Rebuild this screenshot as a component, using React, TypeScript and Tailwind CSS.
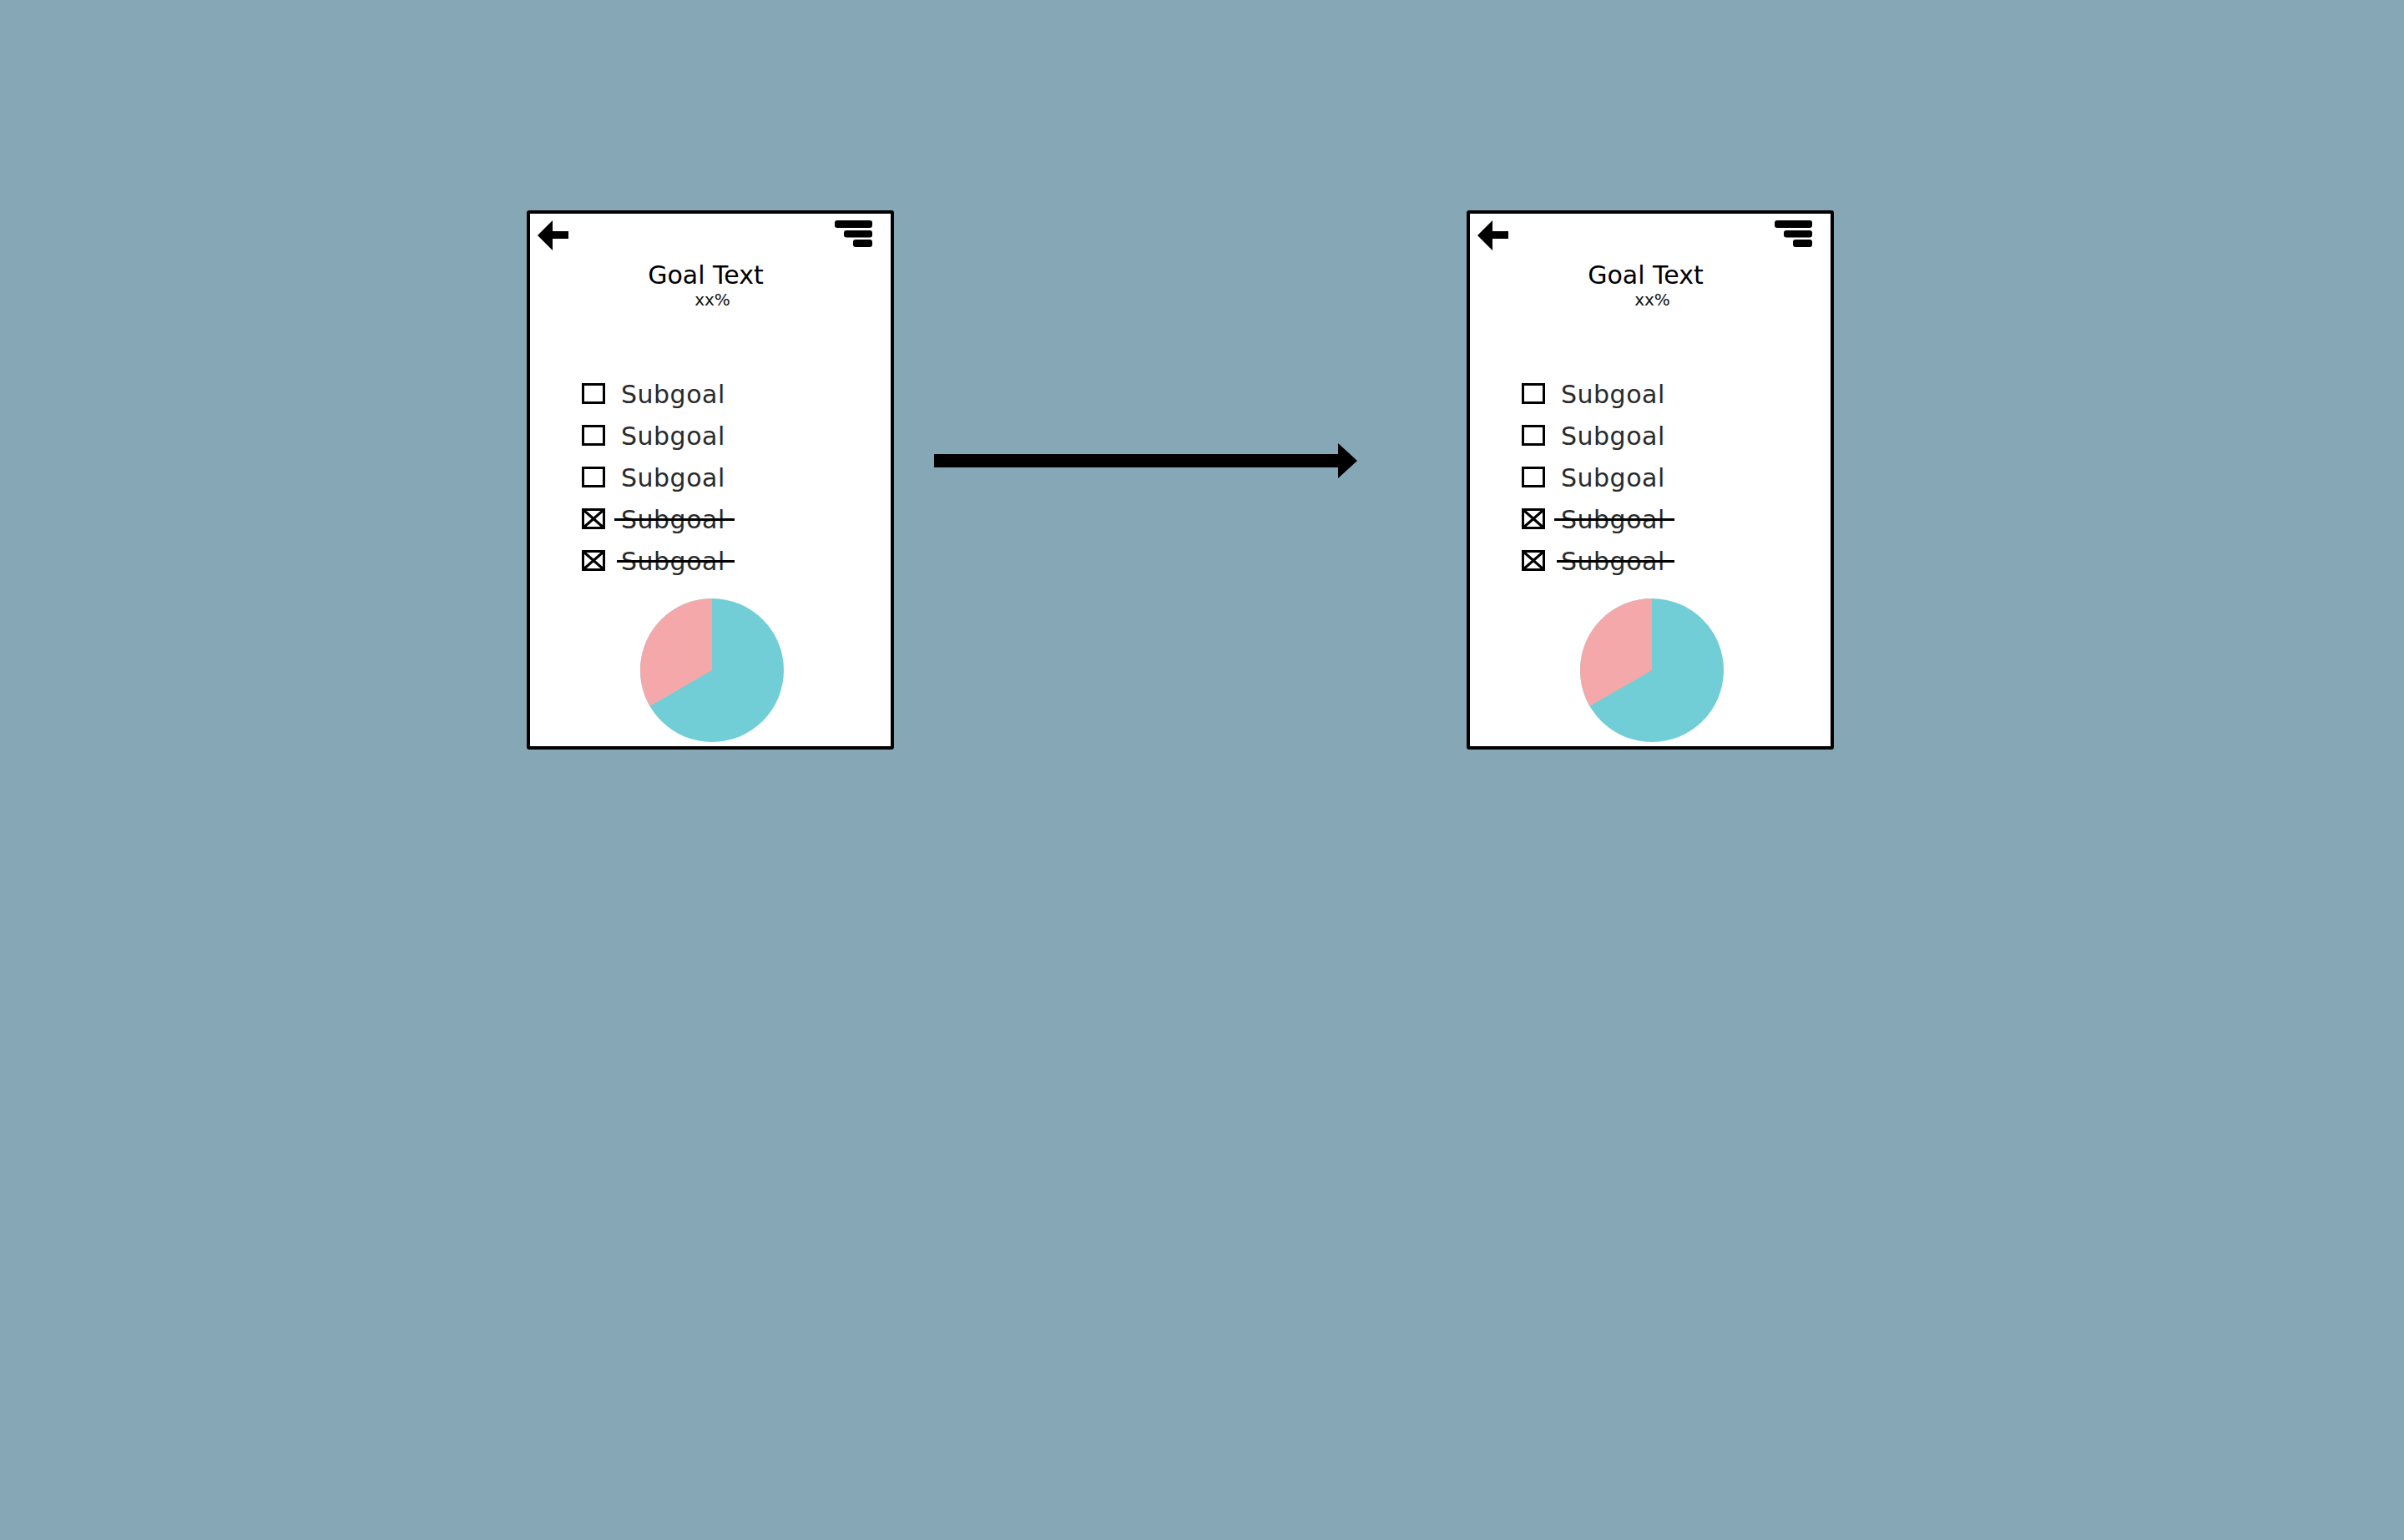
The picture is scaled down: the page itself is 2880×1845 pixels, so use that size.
import React from "react";

const font = { fontFamily: '"DejaVu Sans", "Liberation Sans", sans-serif' };

function BackArrow() {
  return (
    <svg width="37" height="36" viewBox="0 0 37 36" className="block">
      <polygon points="0,18 18,0 18,13 37,13 37,22 18,22 18,36" fill="#000" />
    </svg>
  );
}

function Hamburger() {
  return (
    <svg width="46" height="32" viewBox="0 0 46 32" className="block">
      <rect x="0" y="0" width="45" height="9" rx="3" fill="#000" />
      <rect x="11" y="12" width="34" height="8.5" rx="3" fill="#000" />
      <rect x="22" y="23" width="23" height="9" rx="3" fill="#000" />
    </svg>
  );
}

function Box({ checked }: { checked: boolean }) {
  return (
    <svg width="28" height="25" viewBox="0 0 28 25" className="block mt-[1px] shrink-0">
      <rect x="1.5" y="1.5" width="25" height="22" fill="none" stroke="#000" strokeWidth="3" />
      {checked && (
        <>
          <line x1="2" y1="2" x2="26" y2="23" stroke="#000" strokeWidth="3" />
          <line x1="26" y1="2" x2="2" y2="23" stroke="#000" strokeWidth="3" />
        </>
      )}
    </svg>
  );
}

function Row({ checked, strikeLeft }: { checked: boolean; strikeLeft?: number }) {
  return (
    <div className="flex items-start h-[30px] gap-[19px]">
      <Box checked={checked} />
      <div className="relative">
        <span className="block text-[30px] leading-none tracking-[0.5px] text-[#2a2a2a]" style={font}>
          Subgoal
        </span>
        {checked && (
          <div
            className={
              strikeLeft === 5
                ? "absolute top-[13px] left-[-5px] w-[141px] h-[3px] bg-black"
                : "absolute top-[13px] left-[-8px] w-[144px] h-[3px] bg-black"
            }
          />
        )}
      </div>
    </div>
  );
}

function Pie() {
  return (
    <svg width="172" height="172" viewBox="0 0 172 172" className="block">
      <circle cx="86" cy="86" r="86" fill="#71ced6" />
      <path d="M86,86 L86,0 A86,86 0 0,0 11.52,129 Z" fill="#f5a8a9" />
    </svg>
  );
}

function Card() {
  return (
    <div className="w-[440px] h-[646px] shrink-0 bg-white border-[4px] border-black rounded-[3px] flex flex-col">
      <div className="flex justify-between items-start pt-[8px] pl-[9px] pr-[21px]">
        <BackArrow />
        <Hamburger />
      </div>
      <div className="mt-[15px] pr-[11px] text-center text-[30px] leading-none text-black" style={font}>
        Goal Text
      </div>
      <div className="mt-[4px] pl-[5px] text-center text-[20px] leading-none text-[#111]" style={font}>
        xx%
      </div>
      <div className="mt-[89px] pl-[62px] flex flex-col gap-[20px]">
        <Row checked={false} />
        <Row checked={false} />
        <Row checked={false} />
        <Row checked={true} strikeLeft={8} />
        <Row checked={true} strikeLeft={5} />
      </div>
      <div className="mt-[29px] flex justify-center pl-[4px]">
        <Pie />
      </div>
    </div>
  );
}

function BigArrow() {
  return (
    <svg width="507" height="42" viewBox="0 0 507 42" className="block">
      <rect x="0" y="13" width="486" height="16" fill="#000" />
      <polygon points="484,0 507,21 484,42" fill="#000" />
    </svg>
  );
}

export default function App() {
  return (
    <div className="w-full min-h-screen bg-[#86a7b6] pt-[252px] pl-[631px]">
      <div className="flex items-start">
        <Card />
        <div className="ml-[48px] mt-[279px]">
          <BigArrow />
        </div>
        <div className="ml-[131px]">
          <Card />
        </div>
      </div>
    </div>
  );
}
